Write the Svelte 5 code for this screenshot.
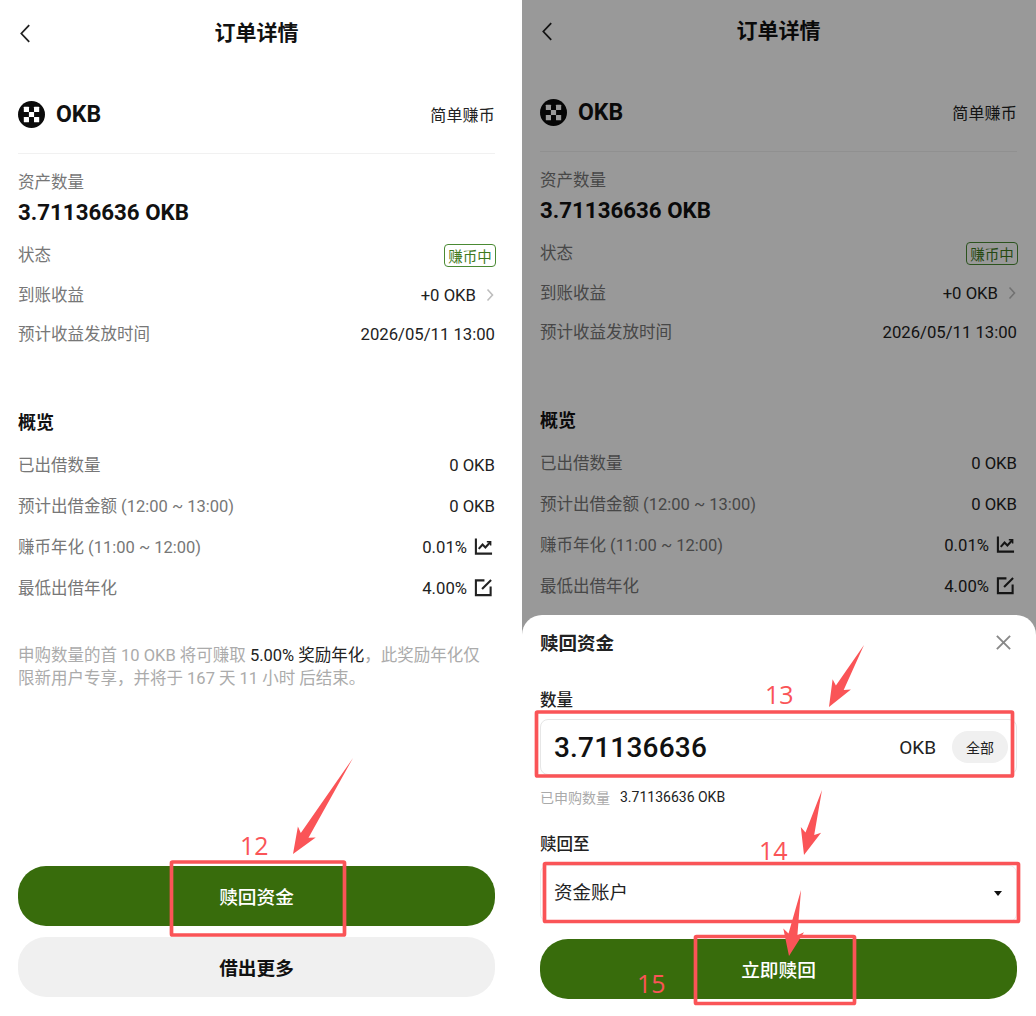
<script>
  const arrow = (x1, y1, x2, y2) => {
    const L = Math.hypot(x2 - x1, y2 - y1);
    const ux = (x2 - x1) / L, uy = (y2 - y1) / L;
    const nx = -uy, ny = ux;
    const p = (back, side) => `${(x2 - ux * back + nx * side).toFixed(1)},${(y2 - uy * back + ny * side).toFixed(1)}`;
    return [`${x1},${y1}`, p(22, -4.5), p(26, -10.5), `${x2},${y2}`, p(26, 10.5), p(22, 4.5)].join(' ');
  };
  const arrows = [
    [353, 758, 293, 854],
    [864, 645, 829, 707],
    [822, 790, 804, 855],
    [801, 890, 789, 956]
  ].map((a) => arrow(...a));
  const boxes = [
    [171.5, 862, 173, 73],
    [536.5, 712, 476, 64],
    [544.5, 863.5, 474, 58],
    [695.5, 936.5, 159, 67]
  ];
  const labels = [
    ['12', 240, 855],
    ['13', 765, 704],
    ['14', 759, 860],
    ['15', 637, 993]
  ];
</script>

{#snippet details()}
  <header class="nav">
    <svg class="back" viewBox="0 0 14 22" aria-hidden="true"><path d="M11 2 2.5 11l8.5 9" /></svg>
    <h1>订单详情</h1>
  </header>

  <div class="coin">
    <div class="coin-name">
      <svg class="logo" viewBox="0 0 26 26" aria-hidden="true">
        <circle cx="13" cy="13" r="13" fill="#0b0b0b" />
        <rect x="5.6" y="5.6" width="5" height="5" rx="0.5" fill="#fff" />
        <rect x="15.4" y="5.6" width="5" height="5" rx="0.5" fill="#fff" />
        <rect x="10.5" y="10.5" width="5" height="5" rx="0.5" fill="#fff" />
        <rect x="5.6" y="15.4" width="5" height="5" rx="0.5" fill="#fff" />
        <rect x="15.4" y="15.4" width="5" height="5" rx="0.5" fill="#fff" />
      </svg>
      <span>OKB</span>
    </div>
    <span class="product">简单赚币</span>
  </div>

  <div class="asset-label">资产数量</div>
  <div class="asset-value">3.71136636 OKB</div>

  <div class="rows top-rows">
    <div class="row"><span class="key">状态</span><span class="tag">赚币中</span></div>
    <div class="row">
      <span class="key">到账收益</span>
      <span class="val">+0 OKB
        <svg class="chev" viewBox="0 0 8 14" aria-hidden="true"><path d="M1.5 1.5 6.5 7l-5 5.5" /></svg>
      </span>
    </div>
    <div class="row"><span class="key">预计收益发放时间</span><span class="val">2026/05/11 13:00</span></div>
  </div>

  <h2>概览</h2>
  <div class="rows overview">
    <div class="row"><span class="key">已出借数量</span><span class="val">0 OKB</span></div>
    <div class="row"><span class="key">预计出借金额 (12:00 ~ 13:00)</span><span class="val">0 OKB</span></div>
    <div class="row">
      <span class="key">赚币年化 (11:00 ~ 12:00)</span>
      <span class="val">0.01%
        <svg class="tool" viewBox="0 0 20 20" aria-hidden="true">
          <path d="M2 1.5V17.5H19" />
          <path d="M5 12.5 9 8l3 3 5-5.5" />
          <path d="M13.5 5H17.5V9" stroke-width="1.6" />
        </svg>
      </span>
    </div>
    <div class="row">
      <span class="key">最低出借年化</span>
      <span class="val">4.00%
        <svg class="tool" viewBox="0 0 20 20" aria-hidden="true">
          <path d="M11 2.5H2V18H17.5V9" />
          <path d="M8.5 11.5 18 2" />
        </svg>
      </span>
    </div>
  </div>

  <p class="note">申购数量的首 10 OKB 将可赚取 <b>5.00% 奖励年化</b>，此奖励年化仅限新用户专享，并将于 167 天 11 小时 后结束。</p>
{/snippet}

<main class="page">
  <section class="panel">
    {@render details()}
    <div class="actions">
      <button class="btn primary">赎回资金</button>
      <button class="btn secondary">借出更多</button>
    </div>
  </section>

  <section class="panel dim">
    {@render details()}
    <div class="scrim"></div>
    <div class="sheet">
      <div class="sheet-head">
        <h3>赎回资金</h3>
        <svg class="close" viewBox="0 0 18 18" aria-hidden="true"><path d="M2 2l14 14M16 2 2 16" /></svg>
      </div>
      <div class="field-label qty">数量</div>
      <div class="input">
        <span class="amount">3.71136636</span>
        <span class="unit">OKB</span>
        <span class="all">全部</span>
      </div>
      <div class="helper"><span>已申购数量</span><b>3.71136636 OKB</b></div>
      <div class="field-label to">赎回至</div>
      <div class="select">
        <span class="select-text">资金账户</span>
        <i class="caret"></i>
      </div>
      <button class="btn primary confirm">立即赎回</button>
    </div>
  </section>

  <svg class="marks" viewBox="0 0 1036 1016" aria-hidden="true">
    {#each boxes as b}
      <rect x={b[0]} y={b[1]} width={b[2]} height={b[3]} rx="1" />
    {/each}
    {#each arrows as pts}
      <polygon points={pts} />
    {/each}
    {#each labels as l}
      <text x={l[1]} y={l[2]}>{l[0]}</text>
    {/each}
  </svg>
</main>

<style>
  :global(body) { margin: 0; background: #fff; }
  .page {
    position: relative;
    display: flex;
    width: 1036px;
    height: 1016px;
    overflow: hidden;
    font-family: Roboto, "Noto Sans CJK SC", sans-serif;
    color: #111;
  }
  .panel {
    position: relative;
    display: flex;
    flex-direction: column;
    box-sizing: border-box;
    width: 522px;
    height: 1016px;
    padding: 0 27px 19px 18px;
    background: #fff;
  }
  .dim { width: 514px; padding: 0 19px 19px 18px; }
  .dim .nav { margin-top: -2px; }

  .nav {
    position: relative;
    display: flex;
    align-items: center;
    justify-content: center;
    flex: none;
    box-sizing: border-box;
    height: 64px;
    padding-top: 2px;
  }
  h1 { margin: 0; font-size: 21px; font-weight: 700; line-height: 1; }
  .back {
    position: absolute;
    left: 1px;
    top: 23px;
    width: 13px;
    height: 21px;
    fill: none;
    stroke: #222;
    stroke-width: 1.9;
  }

  .coin {
    display: flex;
    align-items: center;
    justify-content: space-between;
    flex: none;
    height: 50px;
    margin-top: 25px;
    padding-bottom: 14px;
    border-bottom: 1px solid #f1f1f1;
  }
  .coin-name { display: flex; align-items: center; gap: 11px; font-size: 23px; font-weight: 700; }
  .logo { width: 27px; height: 27px; }
  .product { font-size: 16px; letter-spacing: 0.2px; color: #222; }

  .asset-label { margin-top: 17px; height: 24px; line-height: 24px; font-size: 16.5px; color: #777; }
  .asset-value { margin-top: 2px; height: 30px; line-height: 30px; font-size: 22.3px; font-weight: 700; }

  .rows { display: flex; flex-direction: column; }
  .top-rows { margin-top: 8px; }
  .top-rows .row:last-child { height: 38px; }
  .row {
    display: flex;
    align-items: center;
    justify-content: space-between;
    height: 40px;
    font-size: 16.5px;
  }
  .overview { margin-top: 7px; }
  .overview .row { height: 41px; }
  .key { color: #777; margin-bottom: 2px; }
  .overview .key { margin-bottom: 3px; }
  .val { display: flex; align-items: center; gap: 7px; color: #222; font-size: 16.7px; }
  .tag {
    box-sizing: border-box;
    display: flex;
    align-items: center;
    justify-content: center;
    width: 52px;
    height: 23px;
    margin-right: -1px;
    border: 1px solid #4a8a33;
    border-radius: 4px;
    font-size: 14.5px;
    color: #3f7a1e;
  }
  .chev { width: 8px; height: 14px; margin: 0 1px 0 3px; fill: none; stroke: #bdbdbd; stroke-width: 1.6; }
  .tool { width: 19px; height: 19px; margin: -3px 2px 0 0; fill: none; stroke: #222; stroke-width: 2.2; }

  h2 { margin: 55px 0 0; height: 30px; line-height: 30px; font-size: 18px; font-weight: 700; }

  .note {
    margin: 35px 0 0;
    width: 470px;
    font-size: 16.5px;
    line-height: 23px;
    color: #ababab;
  }
  .note b { font-weight: 400; color: #222; }

  .actions { display: flex; flex-direction: column; gap: 11px; margin-top: auto; }
  .btn {
    display: block;
    width: 100%;
    height: 60px;
    padding: 0 0 2px;
    border: 0;
    border-radius: 28px;
    font-family: inherit;
    font-size: 18.7px;
    font-weight: 700;
  }
  .primary { background: #386c0c; color: #fff; font-weight: 500; }
  .secondary { background: #f0f0f0; color: #111; }

  .scrim { position: absolute; inset: 0; background: rgba(0, 0, 0, 0.4); }
  .sheet {
    position: absolute;
    left: 0;
    right: 0;
    bottom: 0;
    box-sizing: border-box;
    height: 401px;
    padding: 13px 19px 0 18px;
    background: #fff;
    border-radius: 20px 20px 0 0;
  }
  .sheet-head { display: flex; align-items: center; justify-content: space-between; height: 28px; }
  h3 { margin: 0; font-size: 18.5px; font-weight: 700; color: #222; }
  .close { width: 17px; height: 17px; margin-right: 5px; fill: none; stroke: #888; stroke-width: 2; }

  .field-label { height: 24px; line-height: 24px; font-size: 16.5px; font-weight: 500; color: #222; }
  .qty { margin-top: 33px; }
  .to { margin-top: 26px; }

  .input {
    display: flex;
    align-items: center;
    box-sizing: border-box;
    height: 56px;
    margin-top: 6px;
    padding: 0 8px 0 13px;
    border: 1px solid #e6e6e6;
    border-radius: 8px;
  }
  .amount { flex: 1; font-size: 28px; font-weight: 500; color: #111; letter-spacing: 0.2px; }
  .unit { font-size: 19px; color: #222; margin-right: 16px; }
  .all {
    display: flex;
    align-items: center;
    justify-content: center;
    width: 56px;
    height: 32px;
    border-radius: 16px;
    background: #f0f0f0;
    font-size: 14px;
    color: #222;
  }

  .helper {
    display: flex;
    align-items: center;
    gap: 10px;
    height: 20px;
    margin-top: 12px;
    font-size: 14px;
    color: #aaa;
  }
  .helper b { font-weight: 400; color: #222; }

  .select {
    display: flex;
    align-items: center;
    justify-content: space-between;
    box-sizing: border-box;
    height: 57px;
    margin-top: 8px;
    padding: 0 14px 0 13px;
    border: 1px solid #eee;
    border-radius: 8px;
    font-size: 18.5px;
    color: #222;
  }
  .select-text { margin-bottom: 5px; }
  .caret {
    width: 0;
    height: 0;
    border-left: 4px solid transparent;
    border-right: 4px solid transparent;
    border-top: 5px solid #111;
  }
  .confirm { margin-top: 17px; }

  .marks { position: absolute; inset: 0; width: 1036px; height: 1016px; pointer-events: none; }
  .marks rect { fill: none; stroke: #fa5457; stroke-width: 3.7; }
  .marks polygon { fill: #fa5457; }
  .marks text { fill: #fa5457; font-family: "Open Sans", sans-serif; font-size: 25px; }
</style>
